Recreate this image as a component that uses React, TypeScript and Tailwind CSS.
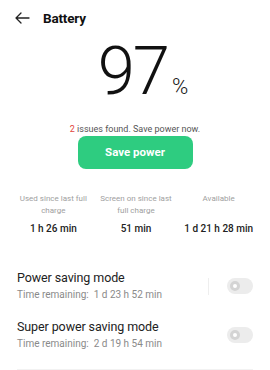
const stats = [
  { label: "Used since last full charge", value: "1 h 26 min" },
  { label: "Screen on since last full charge", value: "51 min" },
  { label: "Available", value: "1 d 21 h 28 min" },
];

function Toggle() {
  return (
    <div className="w-[26px] h-[16px] rounded-full bg-[#ececec] flex items-center pl-[3px]">
      <div className="w-[10px] h-[10px] rounded-full border-[3px] border-[#d4d4d4] bg-white" />
    </div>
  );
}

function Mode({ title, remaining }: { title: string; remaining: string }) {
  return (
    <div>
      <div className="text-[12.5px] leading-[16px] tracking-[-0.1px] text-[#222]">{title}</div>
      <div className="mt-[2px] text-[10px] leading-[14px] text-[#8a8a8a]">Time remaining:&nbsp; {remaining}</div>
    </div>
  );
}

export default function App() {
  return (
    <div className="w-[270px] h-[370px] bg-white overflow-hidden text-[#111]" style={{ fontFamily: "Roboto, 'Noto Sans', sans-serif" }}>
      {/* Header */}
      <div className="flex items-center h-[36px] pl-[15px]">
        <svg width="15" height="12" viewBox="0 0 15 12" fill="none" stroke="#222" strokeWidth="1.3" strokeLinecap="round" strokeLinejoin="round">
          <path d="M1 6h13M6 1L1 6l5 5" />
        </svg>
        <span className="ml-[13px] text-[13.5px] font-bold tracking-[-0.2px]">Battery</span>
      </div>

      {/* Level */}
      <div className="flex justify-center items-baseline mt-[2px] pl-[16px]">
        <span className="text-[67px] leading-none font-light tracking-[-2px]">97</span>
        <span className="text-[22px] leading-none font-light ml-[4px]">%</span>
      </div>

      <p className="mt-[18px] text-center text-[9px] leading-[12px] text-[#555]">
        <span className="text-[#e2463c]">2</span> issues found. Save power now.
      </p>

      <div className="flex justify-center mt-[1px]">
        <button className="w-[115px] h-[33px] rounded-[8px] bg-[#2ecc80] text-white text-[11.5px] font-bold">
          Save power
        </button>
      </div>

      {/* Stats */}
      <div className="grid grid-cols-3 pl-[12px] pr-[10px] mt-[24px]">
        {stats.map((s) => (
          <div key={s.label} className="flex flex-col items-center">
            <div className="h-[24px] text-center text-[8px] leading-[12px] text-[#a0a0a0]">{s.label}</div>
            <div className="mt-[5px] text-[10px] leading-[14px] font-medium text-[#222]">{s.value}</div>
          </div>
        ))}
      </div>

      {/* Modes */}
      <div className="mt-[34px] px-[17px]">
        <div className="flex items-center justify-between">
          <Mode title="Power saving mode" remaining="1 d 23 h 52 min" />
          <div className="flex items-center gap-[18px]">
            <div className="w-px h-[17px] bg-[#eeeeee]" />
            <Toggle />
          </div>
        </div>
        <div className="flex items-center justify-between mt-[17px]">
          <Mode title="Super power saving mode" remaining="2 d 19 h 54 min" />
          <Toggle />
        </div>
        <div className="mt-[18px] h-[2px] bg-[#f2f2f2]" />
      </div>
    </div>
  );
}
